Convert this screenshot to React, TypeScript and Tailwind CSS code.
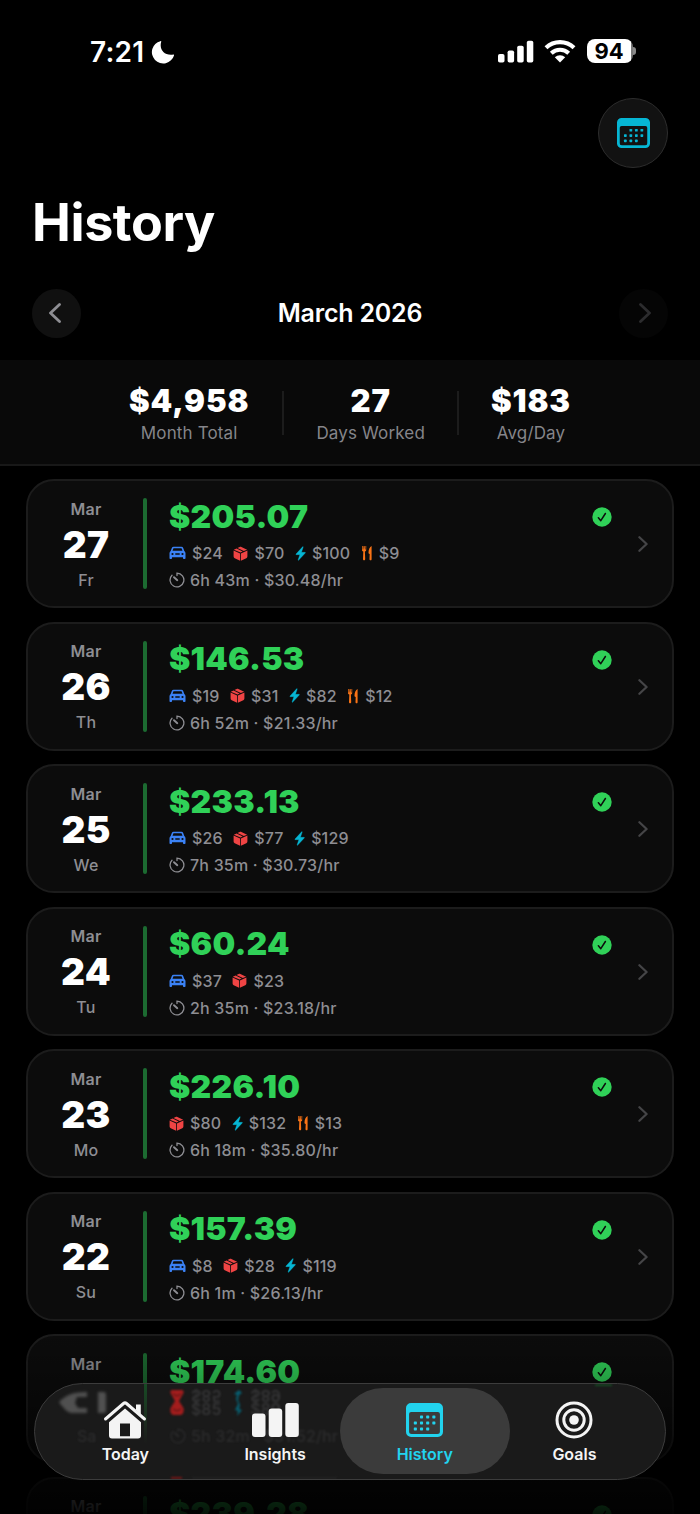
import type { ReactNode } from "react";

type Source = "car" | "box" | "bolt" | "food";

type Day = {
    date: number;
    weekday: string;
    total: string;
    sources: [Source, string][];
    time: string;
};

const days: Day[] = [
    { date: 27, weekday: "Fr", total: "$205.07", sources: [["car", "$24"], ["box", "$70"], ["bolt", "$100"], ["food", "$9"]], time: "6h 43m · $30.48/hr" },
    { date: 26, weekday: "Th", total: "$146.53", sources: [["car", "$19"], ["box", "$31"], ["bolt", "$82"], ["food", "$12"]], time: "6h 52m · $21.33/hr" },
    { date: 25, weekday: "We", total: "$233.13", sources: [["car", "$26"], ["box", "$77"], ["bolt", "$129"]], time: "7h 35m · $30.73/hr" },
    { date: 24, weekday: "Tu", total: "$60.24", sources: [["car", "$37"], ["box", "$23"]], time: "2h 35m · $23.18/hr" },
    { date: 23, weekday: "Mo", total: "$226.10", sources: [["box", "$80"], ["bolt", "$132"], ["food", "$13"]], time: "6h 18m · $35.80/hr" },
    { date: 22, weekday: "Su", total: "$157.39", sources: [["car", "$8"], ["box", "$28"], ["bolt", "$119"]], time: "6h 1m · $26.13/hr" },
    { date: 21, weekday: "Sa", total: "$174.60", sources: [], time: "" },
    { date: 20, weekday: "Fr", total: "$239.28", sources: [], time: "" },
];

function CarIcon() {
    return <svg width="17" height="14" viewBox="0 0 17 14" className="text-[#3b82f6]">
        <path fill="currentColor" fillRule="evenodd" d="M4.600.800h7.800c.9 0 1.500.4 1.800 1.200l1.100 3c.8.6 1.200 1.300 1.200 2.300v4.900c0 .5-.3.800-.8.800h-.9c-.5 0-.8-.3-.8-.8v-1H3v1c0 .5-.3.800-.8.800h-.9c-.5 0-.8-.3-.8-.8V7.300c0-1 .4-1.700 1.200-2.300l1.100-3C3.100 1.200 3.700.8 4.600.8zM4.500 2.200l-1 2.500h10l-1-2.500zM3.500 6.900a1.100 1.100 0 1 0 0 2.200 1.100 1.100 0 0 0 0-2.200zM13.500 6.900a1.100 1.100 0 1 0 0 2.200 1.100 1.100 0 0 0 0-2.200zM6.300 7.300v1.500h4.400V7.300z" />
    </svg>;
}

function BoxIcon() {
    return <svg width="15" height="15" viewBox="0 0 15 15" className="text-[#ef4444]">
        <path fill="currentColor" d="M7.100 7.400v7.300L1.700 12.200C1 11.900.6 11.300.6 10.600V4.600zM7.900 7.400v7.300l5.400-2.500c.7-.3 1.100-.9 1.100-1.600V4.600zM.9 3.700 3.500 2.400l6.200 3-2.200 1.100zM4.500 2 6.600.9c.6-.3 1.200-.3 1.800 0l5.700 2.800-3.300 1.400z" />
    </svg>;
}

function BoltIcon() {
    return <svg width="11" height="15" viewBox="0 0 11 15" className="text-[#06b6d4]">
        <path fill="currentColor" stroke="currentColor" strokeWidth=".3" d="M7.600.8 1 8c-.3.400-.2.700.2.700h3.600l-1.700 5c-.2.700.3.900.7.400L10.300 7c.3-.4.1-.7-.3-.7H6.500l1.700-5c.2-.7-.2-.9-.6-.5z" />
    </svg>;
}

function FoodIcon() {
    return <svg width="12" height="16" viewBox="0 0 12 16" className="text-[#f97316]">
        <path fill="currentColor" d="M1 1v3.800c0 1 .4 1.500 1.300 1.800L2 14c0 .800.400 1.300 1.100 1.300S4.200 14.800 4.200 14l-.3-7.400C4.800 6.300 5.200 5.800 5.200 4.800V1h-.7v3.600H4L3.600 1h-1l-.4 3.600h-.5L1.700 1zM10.600.9C8.700 1.900 7.500 4.600 7.500 7.800c0 .8.300 1.100 1.200 1.200L8.500 14c0 .8.300 1.300 1.100 1.300s1-.5 1-1.300z" />
    </svg>;
}

function TimerIcon() {
    return <svg width="16" height="16" viewBox="0 0 16 16" fill="none" stroke="currentColor" strokeWidth="1.300" strokeLinecap="round">
        <path d="M8 3.600V1.100a6.900 6.900 0 1 1-5 2.100" />
        <path d="M5 5.200 8.300 8.200" strokeWidth="1.900" />
    </svg>;
}

function CheckIcon() {
    return <svg width="20" height="20" viewBox="0 0 20 20">
        <circle cx="10" cy="10" r="9.700" fill="#30d158" />
        <path d="m6.400 10.700 2.400 3 4.600-7.200" fill="none" stroke="#0c0c0c" strokeWidth="1.500" strokeLinecap="round" strokeLinejoin="round" />
    </svg>;
}

function Chevron({ left = false, className }: { left?: boolean; className: string }) {
    return <svg viewBox="0 0 12 20" fill="none" stroke="currentColor" strokeWidth="2.800" strokeLinecap="round" strokeLinejoin="round" className={className}>
        <path d={left ? "m10.500 1.500-9 8.500 9 8.500" : "m1.500 1.500 9 8.500-9 8.500"} />
    </svg>;
}

function CalendarIcon({ className }: { className: string }) {
    const dots = [[15, 13], [21, 13], [27, 13], [9, 19], [15, 19], [21, 19], [27, 19], [9, 25], [15, 25], [21, 25]];
    return <svg viewBox="0 0 36 34" preserveAspectRatio="none" fill="currentColor" className={className}>
        <path fillRule="evenodd" d="M5 0h26a5 5 0 0 1 5 5v24a5 5 0 0 1-5 5H5a5 5 0 0 1-5-5V5a5 5 0 0 1 5-5zM5 9a2 2 0 0 0-2 2v17.500A2.500 2.500 0 0 0 5.500 31h25a2.500 2.500 0 0 0 2.500-2.500V11a2 2 0 0 0-2-2z" />
        {dots.map(([x, y]) => <rect key={x + "-" + y} x={x - 1.4} y={y - 0.6} width="3" height="3" rx=".7" />)}
    </svg>;
}

const sourceIcons: Record<Source, ReactNode> = {
    car: <CarIcon />,
    box: <BoxIcon />,
    bolt: <BoltIcon />,
    food: <FoodIcon />,
};

function StatusBar() {
    return <div className="flex h-[98px] items-start justify-between pl-[90px] pr-[64px] text-white">
        <div className="mt-[39px] flex h-[26px] items-center">
            <span className="w-[61px] text-[28px] font-semibold leading-[26px] tracking-[0.2px]">7:21</span>
            <svg width="24" height="24" viewBox="0 0 24 24">
                <path fill="white" d="M9.400 1.200c.5-.3 1 0 .8.600C8 8.900 13 16 22.300 14.500c.7-.1 1 .3.700.9A11.300 11.300 0 1 1 9.400 1.200z" />
            </svg>
        </div>
        <div className="mt-[39px] flex h-6 items-center">
            <svg width="36" height="23" viewBox="0 0 36 23" fill="white">
                <rect x="0" y="14" width="6.500" height="8.500" rx="1.800" />
                <rect x="9.600" y="10.500" width="6.500" height="12" rx="1.800" />
                <rect x="19.200" y="5.800" width="6.500" height="16.700" rx="1.800" />
                <rect x="28.800" y=".8" width="6.500" height="21.700" rx="1.800" />
            </svg>
            <svg width="32" height="23" viewBox="0 0 32 23" fill="none" stroke="white" className="ml-[10px]">
                <path d="M2 7.800a20.300 20.300 0 0 1 28 0" strokeWidth="4.200" />
                <path d="M7.300 13.300a12.500 12.500 0 0 1 17.400 0" strokeWidth="4" />
                <path d="M10.800 17.300a7.500 7.500 0 0 1 10.400 0L16 22.500z" fill="white" stroke="none" />
            </svg>
            <div className="ml-[11px] flex items-center">
                <div className="flex h-6 w-[46px] items-center justify-center rounded-[8px] bg-linear-to-r from-white from-[95%] to-[#777] to-[95%] pr-[2px] text-[22px] font-bold leading-6 tracking-[-0.2px] text-black">94</div>
                <div className="h-[8px] w-[3px] rounded-r-[3px] bg-[#8a8a8a]" />
            </div>
        </div>
    </div>;
}

function Stat({ value, label }: { value: string; label: string }) {
    return <div className="flex flex-col items-center">
        <span className="text-[31px] font-black leading-[34px] tracking-[0.900px] text-white">{value}</span>
        <span className="text-[17px] leading-[31px] tracking-[0.150px] text-[#85858a]">{label}</span>
    </div>;
}

function DayCard({ day }: { day: Day }) {
    return <div className="flex h-[129px] shrink-0 rounded-[28px] border-2 border-[#1c1c1c] bg-[#0c0c0c] text-[#8e8e93]">
        <div className="flex w-[115px] flex-col items-center pl-px pt-[17.500px]">
            <span className="text-[16px] font-semibold leading-5 tracking-[0.3px]">Mar</span>
            <span className="text-[37px] font-black leading-[51px] tracking-[0.3px] text-white">{day.date}</span>
            <span className="text-[16px] font-medium leading-5 tracking-[0.2px]">{day.weekday}</span>
        </div>
        <div className="mt-[17px] h-[91px] w-[3.500px] rounded-full bg-[#1c6b31]" />
        <div className="flex grow flex-col pl-[22.500px] pt-[17.500px]">
            <span className="text-[32px] font-black leading-9 tracking-[0.250px] text-[#30d158]">{day.total}</span>
            <div className="flex h-[37px] items-center gap-[10.500px] text-[16px] font-medium leading-5 tracking-[0.150px]">
                {day.sources.map(([source, amount]) => <div key={source} className="flex items-center gap-[6px]">
                    {sourceIcons[source]}
                    <span>{amount}</span>
                </div>)}
            </div>
            {day.time && <div className="flex h-[17px] items-center gap-[5px] text-[16px] font-medium tracking-[0.200px]">
                <TimerIcon />
                <span>{day.time}</span>
            </div>}
        </div>
        <div className="mt-[26px]"><CheckIcon /></div>
        <Chevron className="ml-[26px] mr-[24px] mt-[55px] h-4 w-[10px] text-[#454547]" />
    </div>;
}

function Tab({ label, active = false, children }: { label: string; active?: boolean; children: ReactNode }) {
    return <div className={active ? "relative flex w-[149.700px] flex-col items-center text-[#22d3ee]" : "relative flex w-[149.700px] flex-col items-center text-[#f4f4f4]"}>
        {active && <div className="absolute -inset-x-[10px] bottom-[5px] top-[4px] rounded-full bg-[#3b3b3b]" />}
        <div className="relative mt-[14px] flex h-[44px] items-center justify-center">{children}</div>
        <span className="relative mt-[2px] text-[16px] font-semibold leading-5">{label}</span>
    </div>;
}

// what shows through the glass of the tab bar, bent at its edges
function GlassContent() {
    return <div aria-hidden className="absolute inset-0 overflow-hidden rounded-full text-[16px] font-medium text-[#8e8e93]">
        <svg width="74" height="30" className="absolute left-[20px] top-[4px] blur-[1.500px]" fill="#505050">
            <path d="M4 14C10 8 16 4 32 4v5H22l-2 6 3 5h9v5H16C12 24 8 20 4 14zM43 4h6q2 0 2 3v15q0 3-2 3h-6z" />
        </svg>
        <div className="absolute left-[109px] top-0 h-[60px] w-[3px] bg-linear-to-b from-[#164b24] to-[#1a1a1a]" />
        <svg width="14" height="28" viewBox="0 0 14 28" className="absolute left-[135px] top-[5px] blur-[1px]">
            <path d="M2 1h10q2 0 1.500 3L9 12l4.500 7q1 6-3 7h-7q-4-1-3-7L5 12 .5 4Q0 1 2 1z" fill="#a31d1d" />
            <path d="M3 20l4 2 4-2M3 5l4 2 4-2" fill="none" stroke="#4a1212" />
        </svg>
        <svg width="10" height="28" viewBox="0 0 10 28" className="absolute left-[198px] top-[5px] blur-[1px]">
            <path d="M1 5l5-4 3 3-3 2-1 5 2 5-1 4 3 1-5 6 1-5-3-1 3-6-2-5 1-4z" fill="#075e70" />
        </svg>
        <div className="absolute left-[156px] top-[5px] flex flex-col gap-px leading-[13px] opacity-25 blur-[1px]">
            <div className="flex -scale-y-100 gap-[29px]"><span>$85</span><span>$89</span></div>
            <div className="flex gap-[29px]"><span>$85</span><span>$89</span></div>
        </div>
        <span className="absolute left-[42px] top-[40px] opacity-15 blur-[1px]">Sa</span>
        <div className="absolute left-[135px] top-[44px] flex items-center gap-[5px] leading-4 tracking-[0.150px] opacity-15 blur-[1px]"><TimerIcon />5h 32m · $31.52/hr</div>
        <div className="absolute bottom-0 left-[136px] h-[2px] w-[11px] bg-[#7a1717] blur-[1px]" />
        <div className="absolute bottom-0 left-[157px] h-[2px] w-[145px] bg-[#222] blur-[1px]" />
        <div className="absolute left-[560px] top-0 h-[2px] w-[17px] bg-[#164b24] blur-[1px]" />
    </div>;
}

function TabBar() {
    return <div className="absolute left-[34px] top-[1383px] h-[97px] w-[632px] rounded-full border-[1.500px] border-[#3c3c3c] bg-[#1a1a1a]">
        <GlassContent />
        <div className="flex h-full px-[15.500px]">
            <Tab label="Today">
                <svg width="44" height="40" viewBox="0 0 44 40" fill="currentColor">
                    <path d="M33 4.500h4.800v10L33 10z" />
                    <path d="m2.500 19 18-15.500q1.500-1.300 3 0L41.500 19" fill="none" stroke="currentColor" strokeWidth="3" strokeLinecap="round" />
                    <path fillRule="evenodd" d="M22 8.500 38 22.300V35.500q0 3-3 3H9q-3 0-3-3V22.300zM17 23.500v12.700h10V23.500z" />
                </svg>
            </Tab>
            <Tab label="Insights">
                <svg width="47" height="34" viewBox="0 0 47 34" fill="currentColor">
                    <rect x="0" y="10.500" width="13.500" height="23.500" rx="3" />
                    <rect x="16.700" y="5.500" width="13.500" height="28.500" rx="3" />
                    <rect x="33.300" y="0" width="13.500" height="34" rx="3" />
                </svg>
            </Tab>
            <Tab label="History" active>
                <CalendarIcon className="h-[34px] w-[37px]" />
            </Tab>
            <Tab label="Goals">
                <svg width="38" height="38" viewBox="0 0 38 38" fill="none" stroke="currentColor" strokeWidth="3">
                    <circle cx="19" cy="19" r="17" />
                    <circle cx="19" cy="19" r="10.200" />
                    <circle cx="19" cy="19" r="4.800" fill="currentColor" stroke="none" />
                </svg>
            </Tab>
        </div>
    </div>;
}

export default function App() {
    return <div className="relative h-[1514px] w-[700px] overflow-hidden bg-black font-['Inter','Liberation_Sans',sans-serif]">
        <StatusBar />
        <div className="flex justify-end pr-8">
            <div className="flex size-[70px] items-center justify-center rounded-full border-[1.500px] border-[#2d2d2d] bg-[#121212]">
                <CalendarIcon className="h-[30px] w-[33px] text-[#06b6d4]" />
            </div>
        </div>
        <h1 className="mt-[25px] pl-[32px] text-[52px] font-bold leading-[60px] tracking-[-0.400px] text-white">History</h1>
        <div className="mt-[36px] flex h-12 items-center justify-between px-8">
            <div className="flex size-[49px] items-center justify-center rounded-full bg-[#101010]">
                <Chevron left className="mr-[3px] h-5 w-3 text-[#8e8e93]" />
            </div>
            <span className="mt-[2px] text-[25px] font-semibold tracking-[-0.2px] text-white">March 2026</span>
            <div className="flex size-[49px] items-center justify-center rounded-full bg-[#050505]">
                <Chevron className="ml-[3px] h-5 w-3 text-[#2c2c2e]" />
            </div>
        </div>
        <div className="mt-[23px] flex h-[106px] justify-center border-b-2 border-[#181818] bg-[#090909] pt-6">
            <Stat value="$4,958" label="Month Total" />
            <div className="ml-[33px] mr-[32px] mt-[7px] h-11 w-[2px] bg-[#1c1c1c]" />
            <Stat value="27" label="Days Worked" />
            <div className="mx-[32px] mt-[7px] h-11 w-[2px] bg-[#1c1c1c]" />
            <Stat value="$183" label="Avg/Day" />
        </div>
        <div className="flex flex-col gap-[13.500px] px-[26px] pt-[13px]">
            {days.map(day => <DayCard key={day.date} day={day} />)}
        </div>
        <div className="absolute inset-x-0 top-[1330px] h-[184px] bg-linear-to-b from-black/0 via-black/45 via-50% to-black/90" />
        <TabBar />
    </div>;
}
